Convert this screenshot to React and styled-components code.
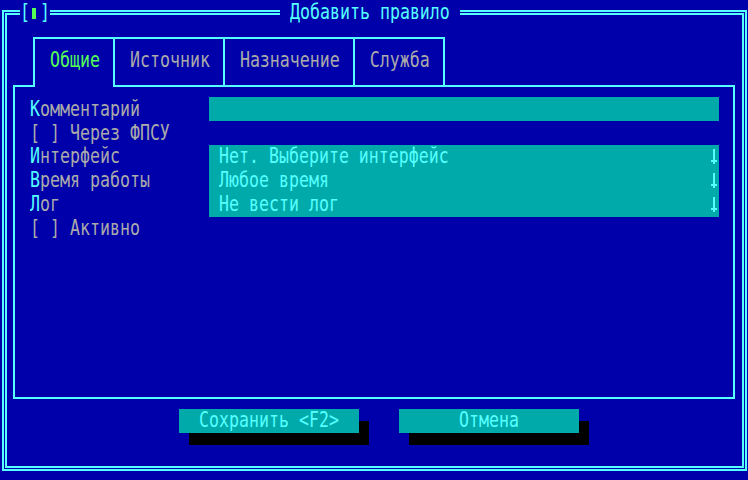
import React from "react";
import styled, { createGlobalStyle, css } from "styled-components";

const BLUE = "#0000aa";
const CYAN = "#55ffff";
const TEAL = "#00aaaa";
const GRAY = "#aaaaaa";
const GREEN = "#55ff55";

const GlobalStyle = createGlobalStyle`
  html, body {
    margin: 0;
    padding: 0;
    background: ${BLUE};
    overflow: hidden;
  }
`;

// text cells are 10px wide, 24px tall; the glyphs are stretched to look like the DOS font
const crt = css`
  display: inline-block;
  font-family: "DejaVu Sans Mono", "Liberation Mono", monospace;
  font-size: 16.6px;
  line-height: 24px;
  height: 24px;
  white-space: pre;
  transform: scaleY(1.3);
`;

const Text = styled.span`
  ${crt};
  color: ${p => p.$color || GRAY};
`;

const Screen = styled.div`
  width: 748px;
  height: 480px;
  box-sizing: border-box;
  padding: 10px 1px 9px 2px;
  background: ${BLUE};
`;

const Dialog = styled.div`
  position: relative;
  height: 100%;
  box-sizing: border-box;
  border: 5px double ${CYAN};
  padding: 22px 7px 0 6px;
`;

const CloseBox = styled.div`
  position: absolute;
  left: 13px;
  top: -15px;
  height: 24px;
  display: flex;
  align-items: center;
  background: ${BLUE};
`;

const Cell = styled.div`
  width: 10px;
  height: 24px;
  display: flex;
  align-items: center;
`;

const CloseMark = styled.span`
  width: 4px;
  height: 11px;
  margin-left: 2px;
  margin-top: 3px;
  background: ${GREEN};
`;

const Title = styled.div`
  position: absolute;
  left: 273px;
  top: -15px;
  height: 24px;
  padding: 0 10px;
  background: ${BLUE};
`;

const TabRow = styled.div`
  display: flex;
  align-items: flex-start;
  margin-left: 20px;
  position: relative;
  z-index: 1;
`;

const Tab = styled.div`
  border: 2px solid ${CYAN};
  border-bottom: none;
  border-right: ${p => (p.$last ? `2px solid ${CYAN}` : "none")};
  padding: 9px 13px ${p => (p.$active ? 15 : 13)}px 15px;
  margin-bottom: ${p => (p.$active ? -2 : 0)}px;
  background: ${BLUE};
`;

const Panel = styled.div`
  height: 314px;
  box-sizing: border-box;
  border: 2px solid ${CYAN};
  padding: 10px 13px 0 15px;
`;

const Form = styled.div`
  display: grid;
  grid-template-columns: 179px 510px;
  grid-auto-rows: 24px;
`;

const Label = styled.div`
  height: 24px;
`;

const CheckRow = styled.div`
  grid-column: 1 / -1;
  height: 24px;
`;

const Field = styled.div`
  display: flex;
  align-items: center;
  justify-content: space-between;
  padding-left: 10px;
  background: ${TEAL};
`;

const ButtonRow = styled.div`
  display: flex;
  gap: 40px;
  margin-top: 10px;
  padding-left: 166px;
`;

const Button = styled.div`
  width: 180px;
  height: 24px;
  display: flex;
  justify-content: center;
  background: ${TEAL};
  box-shadow: 10px 12px 0 #000;
`;

const DownArrow = () => (
  <svg width="10" height="24" viewBox="0 0 10 24">
    <polygon
      points="4,4 6,4 6,15 8,15 8,17 6,17 6,19 4,19 4,17 2,17 2,15 4,15"
      fill={CYAN}
    />
  </svg>
);

const HotLabel = ({ text }) => (
  <Label>
    <Text $color={CYAN}>{text[0]}</Text>
    <Text>{text.slice(1)}</Text>
  </Label>
);

const Select = ({ value }) => (
  <Field>
    <Text $color={CYAN}>{value}</Text>
    <DownArrow />
  </Field>
);

const tabs = ["Общие", "Источник", "Назначение", "Служба"];

export default function App() {
  return (
    <>
      <GlobalStyle />
      <Screen>
        <Dialog>
          <CloseBox>
            <Cell>
              <Text $color={CYAN}>[</Text>
            </Cell>
            <Cell>
              <CloseMark />
            </Cell>
            <Cell>
              <Text $color={CYAN}>]</Text>
            </Cell>
          </CloseBox>
          <Title>
            <Text $color={CYAN}>Добавить правило</Text>
          </Title>

          <TabRow>
            {tabs.map((t, i) => (
              <Tab key={t} $active={i === 0} $last={i === tabs.length - 1}>
                <Text $color={i === 0 ? GREEN : GRAY}>{t}</Text>
              </Tab>
            ))}
          </TabRow>

          <Panel>
            <Form>
              <HotLabel text="Комментарий" />
              <Field />
              <CheckRow>
                <Text>[ ] Через ФПСУ</Text>
              </CheckRow>
              <HotLabel text="Интерфейс" />
              <Select value="Нет. Выберите интерфейс" />
              <HotLabel text="Время работы" />
              <Select value="Любое время" />
              <HotLabel text="Лог" />
              <Select value="Не вести лог" />
              <CheckRow>
                <Text>[ ] Активно</Text>
              </CheckRow>
            </Form>
          </Panel>

          <ButtonRow>
            <Button>
              <Text $color={CYAN}>Сохранить &lt;F2&gt;</Text>
            </Button>
            <Button>
              <Text $color={CYAN}>Отмена</Text>
            </Button>
          </ButtonRow>
        </Dialog>
      </Screen>
    </>
  );
}
